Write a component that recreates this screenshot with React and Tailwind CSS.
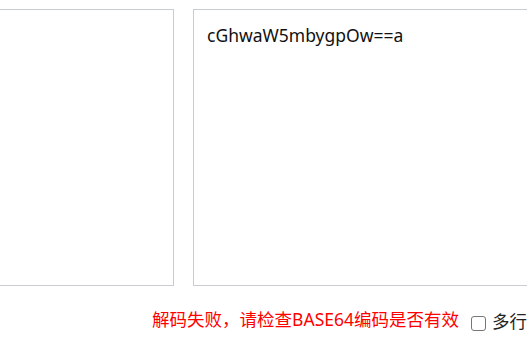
export default function App() {
  return (
    <div
      className="w-[527px] h-[337px] overflow-hidden bg-white"
      style={{ fontFamily: '"Noto Sans", "Noto Sans CJK SC", sans-serif' }}
    >
      <div className="flex gap-[19px] pt-[9px] w-[900px]">
        <div className="w-[174px] h-[277px] border border-l-0 border-[#c8ccd3] bg-white"></div>
        <div className="w-[500px] h-[277px] border border-[#c8ccd3] bg-white pl-[13px] pt-[12px] text-[17.5px] leading-[26px] text-[#111]">
          cGhwaW5mbygpOw==a
        </div>
      </div>
      <div className="flex items-center justify-end pt-[19px] w-[527px]">
        <span className="text-[17.5px] leading-[24px] text-[#ff0000] mr-[12px] whitespace-nowrap">
          解码失败，请检查BASE64编码是否有效
        </span>
        <span className="w-[15px] h-[15px] mt-[8px] border border-[#767676] rounded-[3px] mr-[6px] bg-white shrink-0"></span>
        <span className="text-[17.5px] leading-[24px] mt-[4px] text-[#222] whitespace-nowrap w-[35px] shrink-0 overflow-hidden">多行</span>
      </div>
    </div>
  );
}
